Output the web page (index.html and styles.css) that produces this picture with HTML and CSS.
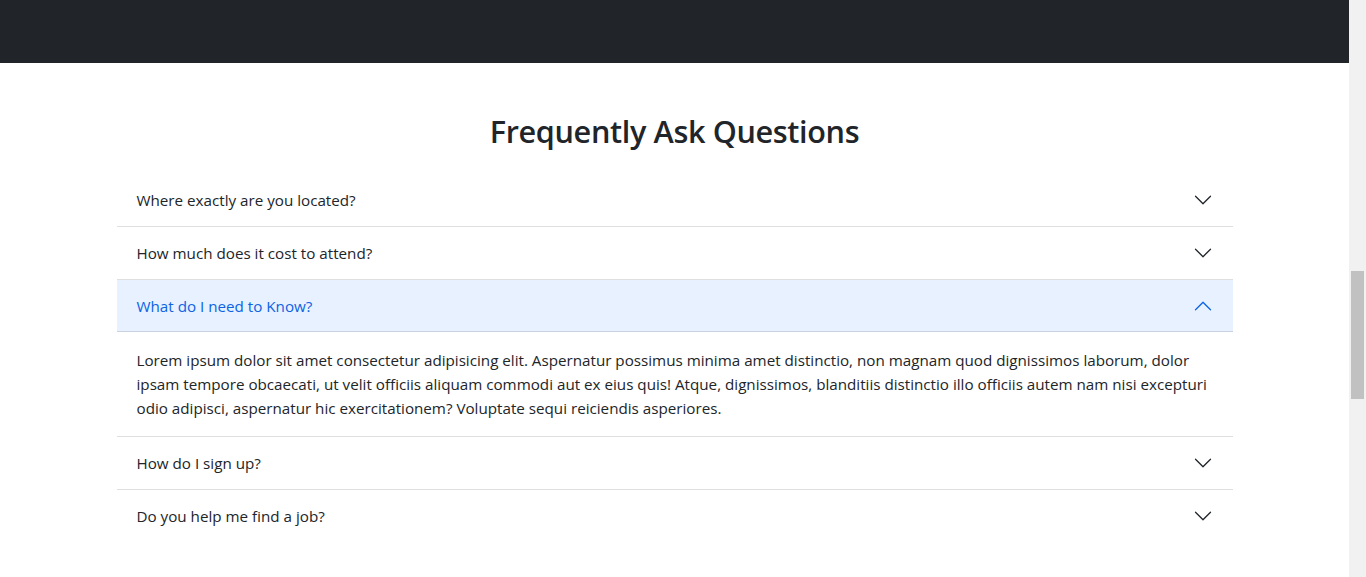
FILE: index.html
```html
<!DOCTYPE html>
<html lang="en">
<head>
<meta charset="utf-8">
<title>FAQ</title>
<link rel="stylesheet" href="styles.css">
</head>
<body>
<div class="page">
  <main class="content">
    <div class="dark-band"></div>
    <section class="faq">
      <div class="container">
        <h2 class="faq-title">Frequently Ask Questions</h2>
        <div class="accordion">
          <div class="acc-item">
            <div class="acc-header">
              <span class="acc-q">Where exactly are you located?</span>
              <svg class="chev" viewBox="0 0 16 16"><path fill-rule="evenodd" d="M1.646 4.646a.5.5 0 0 1 .708 0L8 10.293l5.646-5.647a.5.5 0 0 1 .708.708l-6 6a.5.5 0 0 1-.708 0l-6-6a.5.5 0 0 1 0-.708z"/></svg>
            </div>
          </div>
          <div class="acc-item">
            <div class="acc-header">
              <span class="acc-q">How much does it cost to attend?</span>
              <svg class="chev" viewBox="0 0 16 16"><path fill-rule="evenodd" d="M1.646 4.646a.5.5 0 0 1 .708 0L8 10.293l5.646-5.647a.5.5 0 0 1 .708.708l-6 6a.5.5 0 0 1-.708 0l-6-6a.5.5 0 0 1 0-.708z"/></svg>
            </div>
          </div>
          <div class="acc-item">
            <div class="acc-header active">
              <span class="acc-q">What do I need to Know?</span>
              <svg class="chev" viewBox="0 0 16 16"><path fill-rule="evenodd" d="M1.646 4.646a.5.5 0 0 1 .708 0L8 10.293l5.646-5.647a.5.5 0 0 1 .708.708l-6 6a.5.5 0 0 1-.708 0l-6-6a.5.5 0 0 1 0-.708z"/></svg>
            </div>
            <div class="acc-body">Lorem ipsum dolor sit amet consectetur adipisicing elit. Aspernatur possimus minima amet distinctio, non magnam quod dignissimos laborum, dolor ipsam tempore obcaecati, ut velit officiis aliquam commodi aut ex eius quis! Atque, dignissimos, blanditiis distinctio illo officiis autem nam nisi excepturi odio adipisci, aspernatur hic exercitationem? Voluptate sequi reiciendis asperiores.</div>
          </div>
          <div class="acc-item">
            <div class="acc-header">
              <span class="acc-q">How do I sign up?</span>
              <svg class="chev" viewBox="0 0 16 16"><path fill-rule="evenodd" d="M1.646 4.646a.5.5 0 0 1 .708 0L8 10.293l5.646-5.647a.5.5 0 0 1 .708.708l-6 6a.5.5 0 0 1-.708 0l-6-6a.5.5 0 0 1 0-.708z"/></svg>
            </div>
          </div>
          <div class="acc-item">
            <div class="acc-header">
              <span class="acc-q">Do you help me find a job?</span>
              <svg class="chev" viewBox="0 0 16 16"><path fill-rule="evenodd" d="M1.646 4.646a.5.5 0 0 1 .708 0L8 10.293l5.646-5.647a.5.5 0 0 1 .708.708l-6 6a.5.5 0 0 1-.708 0l-6-6a.5.5 0 0 1 0-.708z"/></svg>
            </div>
          </div>
        </div>
      </div>
    </section>
  </main>
  <div class="scrollbar"><div class="thumb"></div></div>
</div>
</body>
</html>
```
FILE: styles.css
```css
* { box-sizing: border-box; }
html, body { margin: 0; padding: 0; }
body {
  font-family: "Open Sans", "Noto Sans", sans-serif;
  font-size: 15.2px;
  line-height: 24px;
  color: #212529;
  background: #fff;
  overflow: hidden;
}
.page {
  display: flex;
  height: 577px;
}
.content {
  flex: 1;
  min-width: 0;
}
.dark-band {
  height: 63px;
  background: #212529;
}
.faq {
  padding-top: 49px;
}
.container {
  width: 1140px;
  margin: 0 auto;
  padding: 0 12px;
}
.faq-title {
  margin: 0 0 24px;
  text-align: center;
  font-size: 30.6px;
  font-weight: 600;
  letter-spacing: -0.35px;
  line-height: 38px;
  color: #212529;
}
.acc-item {
  border-top: 1px solid rgba(0,0,0,.125);
}
.acc-item:first-child { border-top: 0; }
.acc-header {
  display: flex;
  align-items: center;
  padding: 16px 20px;
  line-height: 19px;
}
.acc-q { flex: 1; }
.chev {
  width: 20px;
  height: 20px;
  fill: #212529;
  flex-shrink: 0;
}
.acc-header.active {
  color: #0c63e4;
  background: #e7f1ff;
  box-shadow: inset 0 -1px 0 rgba(0,0,0,.125);
}
.acc-header.active .chev {
  fill: #0c63e4;
  transform: rotate(180deg);
}
.acc-body {
  padding: 16px 20px;
}
.scrollbar {
  width: 17px;
  flex-shrink: 0;
  background: #f1f1f1;
  padding: 271px 2px 0;
}
.thumb {
  height: 128px;
  background: #c1c1c1;
}
```
